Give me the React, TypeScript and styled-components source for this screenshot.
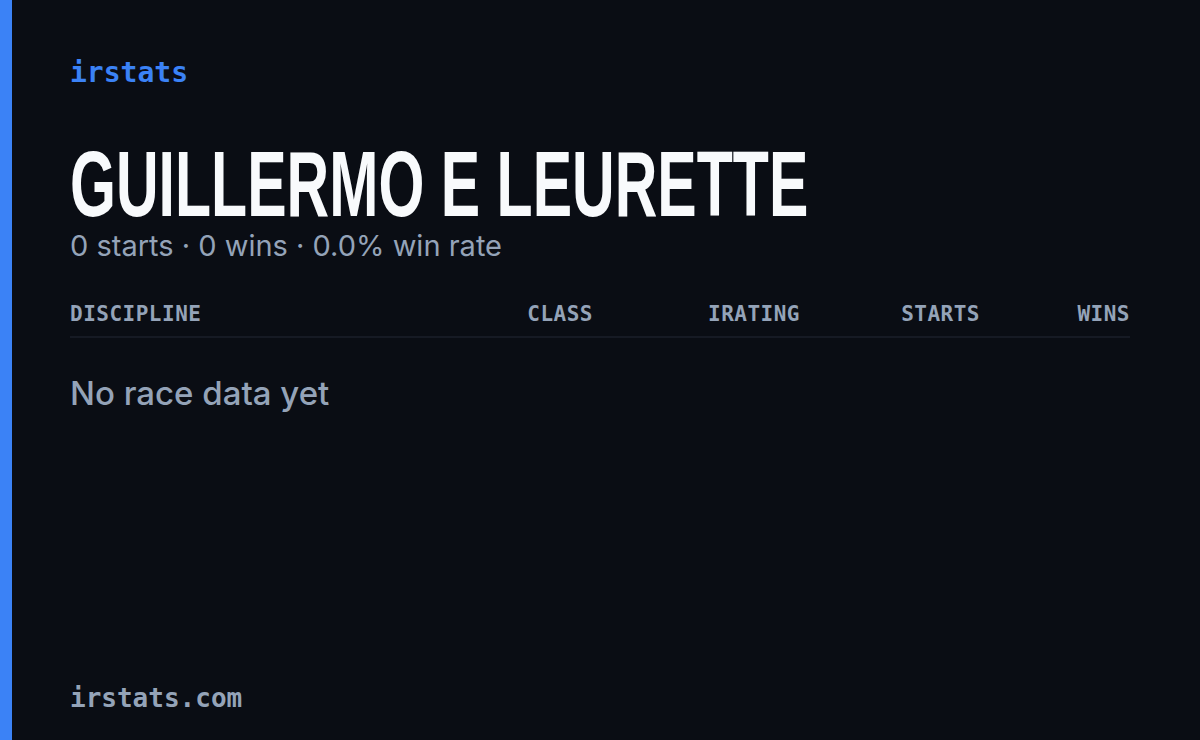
import React from "react";
import styled, { createGlobalStyle } from "styled-components";

const GlobalStyle = createGlobalStyle`
  html, body {
    margin: 0;
    padding: 0;
    background: #0a0d14;
  }
  * { box-sizing: border-box; }
`;

const MONO = `"DejaVu Sans Mono", "Liberation Mono", monospace`;
const SANS = `Inter, "Open Sans", "Noto Sans", sans-serif`;

const Card = styled.div`
  width: 1200px;
  height: 740px;
  display: flex;
  background: #0a0d14;
  overflow: hidden;
`;

const Accent = styled.div`
  width: 12px;
  flex-shrink: 0;
  background: #3b82f6;
`;

const Body = styled.div`
  flex: 1;
  min-width: 0;
  display: flex;
  flex-direction: column;
  padding: 56px 70px 26px 58px;
`;

const Brand = styled.div`
  font-family: ${MONO};
  font-size: 28px;
  font-weight: 600;
  color: #3b82f6;
  line-height: 34px;
`;

const Name = styled.h1`
  margin: 58px 0 0 0;
  font-family: "Liberation Sans", Arial, sans-serif;
  font-size: 92px;
  font-weight: 700;
  line-height: 72px;
  color: #f8fafc;
  white-space: nowrap;
  transform: scaleX(0.642);
  transform-origin: left center;
`;

const Summary = styled.div`
  margin-top: 8px;
  font-family: ${SANS};
  font-size: 29px;
  color: #94a3b8;
  line-height: 36px;
`;

const Table = styled.div`
  margin-top: 36px;
  display: flex;
  flex-direction: column;
`;

const HeadRow = styled.div`
  display: grid;
  grid-template-columns: 1fr 120px 207px 180px 150px;
  padding-bottom: 8px;
  border-bottom: 2px solid #161a24;
`;

const HeadCell = styled.div<{ $align?: "left" | "right" }>`
  font-family: ${MONO};
  font-size: 21px;
  font-weight: 700;
  letter-spacing: 0.5px;
  color: #94a3b8;
  text-align: ${(p) => p.$align ?? "right"};
  line-height: 28px;
`;

const Empty = styled.div`
  margin-top: 35px;
  font-family: ${SANS};
  font-size: 33px;
  font-weight: 500;
  color: #94a3b8;
  line-height: 40px;
`;

const Footer = styled.div`
  margin-top: auto;
  font-family: ${MONO};
  font-size: 26px;
  font-weight: 600;
  color: #94a3b8;
  line-height: 32px;
`;

const columns = ["CLASS", "IRATING", "STARTS", "WINS"];

export default function App() {
  return (
    <>
      <GlobalStyle />
      <Card>
        <Accent />
        <Body>
          <Brand>irstats</Brand>
          <Name>GUILLERMO E LEURETTE</Name>
          <Summary>0 starts · 0 wins · 0.0% win rate</Summary>
          <Table>
            <HeadRow>
              <HeadCell $align="left">DISCIPLINE</HeadCell>
              {columns.map((c) => (
                <HeadCell key={c}>{c}</HeadCell>
              ))}
            </HeadRow>
            <Empty>No race data yet</Empty>
          </Table>
          <Footer>irstats.com</Footer>
        </Body>
      </Card>
    </>
  );
}
